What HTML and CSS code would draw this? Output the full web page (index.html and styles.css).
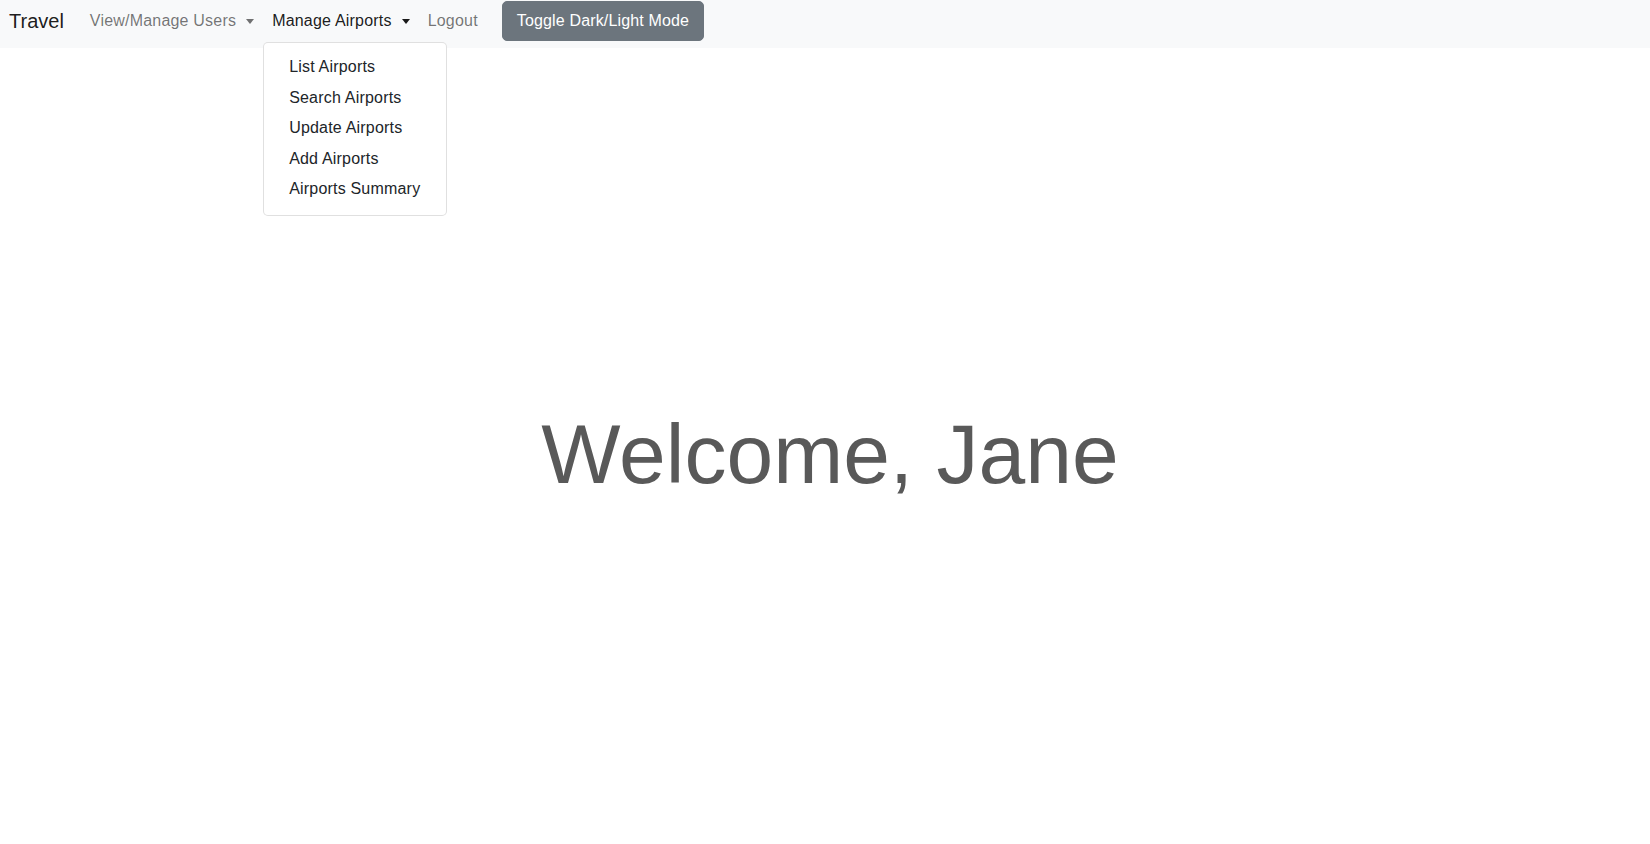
FILE: index.html
```html
<!DOCTYPE html>
<html lang="en">
<head>
<meta charset="utf-8">
<title>Travel</title>
<link rel="stylesheet" href="styles.css">
</head>
<body>
  <nav class="navbar">
    <a class="brand" href="#">Travel</a>
    <ul class="nav">
      <li class="nav-item">
        <a class="nav-link muted" href="#">View/Manage Users<span class="caret"></span></a>
      </li>
      <li class="nav-item open">
        <a class="nav-link active" href="#">Manage Airports<span class="caret"></span></a>
        <ul class="dropdown">
          <li><a class="dropdown-item" href="#">List Airports</a></li>
          <li><a class="dropdown-item" href="#">Search Airports</a></li>
          <li><a class="dropdown-item" href="#">Update Airports</a></li>
          <li><a class="dropdown-item" href="#">Add Airports</a></li>
          <li><a class="dropdown-item" href="#">Airports Summary</a></li>
        </ul>
      </li>
      <li class="nav-item">
        <a class="nav-link muted" href="#">Logout</a>
      </li>
    </ul>
    <button class="toggle-btn" type="button">Toggle Dark/Light Mode</button>
  </nav>
  <main class="main">
    <h1 class="welcome">Welcome, Jane</h1>
  </main>
</body>
</html>
```

FILE: styles.css
```css
* {
  box-sizing: border-box;
}

html, body {
  margin: 0;
  padding: 0;
}

body {
  font-family: "Liberation Sans", Arial, Helvetica, sans-serif;
  font-size: 16px;
  line-height: 24px;
  color: #212529;
  background: #ffffff;
}

a {
  text-decoration: none;
}

.navbar {
  height: 48px;
  background: #f8f9fa;
  display: flex;
  align-items: flex-start;
  padding: 1px 0 0 9px;
}

.brand {
  font-size: 20px;
  line-height: 30px;
  padding-top: 5px;
  margin-right: 17px;
  color: rgba(0, 0, 0, 0.9);
}

.nav {
  list-style: none;
  margin: 0;
  padding: 0;
  display: flex;
}

.nav-item {
  position: relative;
}

.nav-link {
  display: flex;
  align-items: center;
  padding: 8px 9px;
  line-height: 24px;
  letter-spacing: 0.2px;
}

.nav-link.muted {
  color: rgba(0, 0, 0, 0.55);
}

.nav-link.active {
  color: rgba(0, 0, 0, 0.9);
}

.caret {
  display: inline-block;
  margin-left: 10px;
  margin-top: 1px;
  width: 0;
  height: 0;
  border-top: 5px solid currentColor;
  border-left: 4px solid transparent;
  border-right: 4px solid transparent;
}

.dropdown {
  position: absolute;
  left: 0;
  top: 41px;
  list-style: none;
  margin: 0;
  padding: 9px 0 10px;
  background: #ffffff;
  border: 1px solid rgba(0, 0, 0, 0.12);
  border-radius: 5px;
  z-index: 10;
}

.dropdown-item {
  display: block;
  white-space: nowrap;
  padding: 4px 26px 4px 25px;
  line-height: 22.5px;
  letter-spacing: 0.2px;
  color: #212529;
}

.toggle-btn {
  margin-left: 15px;
  font-family: inherit;
  font-size: 16px;
  line-height: 24px;
  letter-spacing: 0.15px;
  padding: 7px 14px;
  color: #ffffff;
  background: #6c757d;
  border: 1px solid #6c757d;
  border-radius: 5px;
}

.main {
  height: 796px;
  display: flex;
  align-items: center;
  justify-content: center;
  padding-top: 16px;
  padding-left: 10px;
}

.welcome {
  margin: 0;
  font-size: 84px;
  line-height: 1.2;
  font-weight: 400;
  color: #595959;
}
```
